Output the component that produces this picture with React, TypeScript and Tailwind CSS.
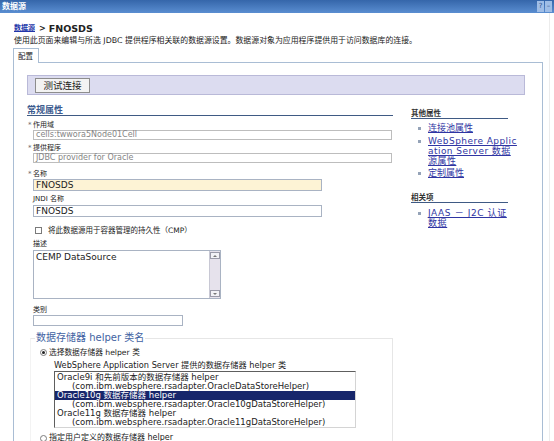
import React from 'react';

function Req({ children, req = false }: { children: React.ReactNode; req?: boolean }) {
  return (
    <div className="flex h-[10px] items-center text-[7px] leading-none text-[#222]">
      <span className="w-[6px] pl-[1px] text-[7px] text-[#666]">{req ? '*' : ''}</span>
      <span>{children}</span>
    </div>
  );
}

function Radio({ checked = false }: { checked?: boolean }) {
  return (
    <span className="flex h-[7px] w-[7px] items-center justify-center rounded-full border border-[#7c7c7c] bg-white">
      {checked && <span className="h-[3px] w-[3px] rounded-full bg-[#222]" />}
    </span>
  );
}

function Bullet({ children }: { children: React.ReactNode }) {
  return (
    <li className="flex items-start">
      <span className="ml-[7px] mt-[4px] h-[3px] w-[3px] shrink-0 bg-[#95a3b8]" />
      <a className="ml-[7px] text-[9px] leading-[10px] text-[#2f35a3] underline">{children}</a>
    </li>
  );
}

const helpers = [
  ['Oracle9i 和先前版本的数据存储器 helper', '(com.ibm.websphere.rsadapter.OracleDataStoreHelper)'],
  ['Oracle10g 数据存储器 helper', '(com.ibm.websphere.rsadapter.Oracle10gDataStoreHelper)'],
  ['Oracle11g 数据存储器 helper', '(com.ibm.websphere.rsadapter.Oracle11gDataStoreHelper)'],
];

export default function App() {
  return (
    <div className="flex h-screen w-full flex-col overflow-hidden bg-white font-['DejaVu_Sans','Noto_Sans_CJK_SC',sans-serif] text-[#222]">
      {/* title bar */}
      <div className="flex h-[13px] shrink-0 items-center justify-between bg-gradient-to-b from-[#3566aa] to-[#5a8ed1] pl-[2px] pr-[2px]">
        <span className="text-[8px] font-bold leading-none text-white">数据源</span>
        <div className="flex h-[11px] gap-px">
          <span className="flex w-[7px] items-center justify-center bg-[#9fbde6] text-[7px] leading-none text-[#2c4f86]">?</span>
          <span className="flex w-[7px] items-center justify-center bg-[#9fbde6] text-[7px] leading-none text-[#2c4f86]">–</span>
        </div>
      </div>

      <div className="flex min-h-0 flex-1">
        <div className="flex w-[550px] flex-col border-r border-[#ececec]">
          {/* breadcrumb */}
          <div className="mt-[11px] flex h-[10px] items-center pl-[14px] leading-none">
            <a className="text-[7px] font-bold text-[#2235a8] underline">数据源</a>
            <span className="ml-[4px] text-[8px] font-bold">&gt;</span>
            <span className="ml-[3px] text-[9.5px] font-bold">FNOSDS</span>
          </div>
          <div className="mt-[3px] flex h-[9px] items-center whitespace-nowrap pl-[14px] text-[7.9px] leading-none">
            使用此页面来编辑与所选 JDBC 提供程序相关联的数据源设置。数据源对象为应用程序提供用于访问数据库的连接。
          </div>

          {/* tab */}
          <div className="ml-[13px] mt-[4px] flex">
            <div className="relative z-10 -mb-px flex h-[15px] w-[26px] items-center border border-b-0 border-[#a9bdd4] bg-white pl-[4px] text-[7.5px] leading-none">
              配置
            </div>
          </div>

          <div className="ml-[13px] flex w-[530px] flex-1 flex-col border border-b-0 border-[#a9bdd4] pl-[13px] pt-[12px]">
            {/* button bar */}
            <div className="flex h-[20px] w-[498px] items-center border border-[#b9b9d8] bg-[#dcdcf0] pl-[7px]">
              <button className="flex h-[15px] w-[55px] items-center justify-center border border-[#8d8d8d] bg-[#f3f3f3] text-[9.5px] leading-none text-[#222]">
                测试连接
              </button>
            </div>

            <div className="mt-[11px] flex">
              {/* left column */}
              <div className="flex w-[366px] flex-col">
                <div className="flex h-[10px] items-center border-b border-[#3f5a84] text-[9px] font-bold leading-none text-[#3b5a8e]">
                  常规属性
                </div>

                <div className="mt-[4px]">
                  <Req req>作用域</Req>
                </div>
                <div className="ml-[6px] flex h-[10px] w-[359px] items-center border border-[#bdbdbd] px-[2px] text-[8px] leading-none text-[#858585]">
                  cells:twwora5Node01Cell
                </div>

                <div className="mt-[3px]">
                  <Req req>提供程序</Req>
                </div>
                <div className="ml-[6px] flex h-[10px] w-[359px] items-center border border-[#bdbdbd] px-[2px] text-[8px] leading-none text-[#858585]">
                  JDBC provider for Oracle
                </div>

                <div className="mt-[6px]">
                  <Req req>名称</Req>
                </div>
                <div className="ml-[6px] flex h-[12px] w-[289px] items-center border border-[#a9b3c3] bg-[#fdf3d5] px-[2px] text-[9px] leading-none">
                  FNOSDS
                </div>

                <div className="mt-[3px]">
                  <Req>JNDI 名称</Req>
                </div>
                <div className="ml-[6px] mt-[1px] flex h-[12px] w-[289px] items-center border border-[#a9b3c3] px-[2px] text-[9px] leading-none">
                  FNOSDS
                </div>

                <div className="mt-[8px] flex h-[10px] items-center pl-[8px] text-[7.5px] leading-none">
                  <span className="h-[7px] w-[7px] border border-[#7a7a7a] bg-white" />
                  <span className="ml-[6px]">将此数据源用于容器管理的持久性（CMP）</span>
                </div>

                <div className="mt-[4px]">
                  <Req>描述</Req>
                </div>
                <div className="ml-[6px] mt-[1px] flex h-[49px] w-[188px] border border-[#a9b3c3]">
                  <div className="flex-1 px-[2px] pt-[1px] text-[9px] leading-[10px]">CEMP DataSource</div>
                  <div className="flex w-[11px] flex-col justify-between border-l border-[#c8c8d4] bg-[#e6e2ec] py-px">
                    <span className="flex h-[7px] items-center justify-center border border-[#9a9aa8] bg-[#f2f2f6]">
                      <span className="h-0 w-0 border-x-[2px] border-b-[2px] border-x-transparent border-b-[#777]" />
                    </span>
                    <span className="flex h-[7px] items-center justify-center border border-[#9a9aa8] bg-[#f2f2f6]">
                      <span className="h-0 w-0 border-x-[2px] border-t-[2px] border-x-transparent border-t-[#777]" />
                    </span>
                  </div>
                </div>

                <div className="mt-[6px]">
                  <Req>类别</Req>
                </div>
                <div className="ml-[6px] h-[11px] w-[150px] border border-[#a9b3c3]" />

                <fieldset className="ml-[3px] mt-[7px] w-[363px] border border-b-0 border-[#e6e6e6] border-l-[#f3f3f3] pb-[20px]">
                  <legend className="ml-[4px] px-[1px] text-[10px] leading-[10px] text-[#4262a2]">数据存储器 helper 类名</legend>
                  <div className="mt-[4px] flex h-[10px] items-center pl-[9px] text-[7.7px] leading-none">
                    <Radio checked />
                    <span className="ml-[2px]">选择数据存储器 helper 类</span>
                  </div>
                  <div className="mt-[3px] flex h-[10px] items-center whitespace-nowrap pl-[23px] text-[8.2px] leading-none">
                    WebSphere Application Server 提供的数据存储器 helper 类
                  </div>
                  <div className="ml-[23px] mt-[1px] h-[57px] w-[302px] border border-b-[#d4d4d4] border-l-[#5e5e5e] border-r-[#d4d4d4] border-t-[#5e5e5e] bg-white pt-px text-[8.5px] leading-[9px]">
                    {helpers.map(([name, cls], i) => (
                      <div key={name}>
                        <div className={i === 1 ? 'h-[9px] whitespace-nowrap bg-[#17266b] pl-[2px] text-white' : 'h-[9px] whitespace-nowrap pl-[2px]'}>
                          {name}
                        </div>
                        <div className="h-[9px] whitespace-nowrap pl-[17px]">{cls}</div>
                      </div>
                    ))}
                  </div>
                  <div className="mt-[5px] flex h-[10px] items-center pl-[9px] text-[8px] leading-none">
                    <Radio />
                    <span className="ml-[2px]">指定用户定义的数据存储器 helper</span>
                  </div>
                </fieldset>
              </div>

              {/* right column */}
              <div className="ml-[18px] flex w-[110px] flex-col">
                <div className="mt-[3px] flex h-[10px] w-[97px] items-center border-b border-[#3f5a84] text-[7.5px] font-bold leading-none text-[#333]">
                  其他属性
                </div>
                <ul className="mt-[4px] flex flex-col">
                  <Bullet>连接池属性</Bullet>
                  <li className="mt-[3px] flex items-start">
                    <span className="ml-[7px] mt-[4px] h-[3px] w-[3px] shrink-0 bg-[#95a3b8]" />
                    <a className="ml-[7px] whitespace-nowrap text-[9px] leading-[10px] tracking-[0.45px] text-[#2f35a3] underline">
                      WebSphere Applic
                      <br />
                      ation Server 数据
                      <br />
                      源属性
                    </a>
                  </li>
                  <li className="mt-[2px]">
                    <ul>
                      <Bullet>定制属性</Bullet>
                    </ul>
                  </li>
                </ul>

                <div className="mt-[15px] flex h-[10px] w-[97px] items-center border-b border-[#3f5a84] text-[7.5px] font-bold leading-none text-[#333]">
                  相关项
                </div>
                <ul className="mt-[5px]">
                  <li className="flex items-start">
                    <span className="ml-[7px] mt-[4px] h-[3px] w-[3px] shrink-0 bg-[#95a3b8]" />
                    <a className="ml-[7px] whitespace-nowrap text-[9px] leading-[10px] tracking-[0.6px] text-[#2f35a3] underline">
                      JAAS － J2C 认证
                      <br />
                      数据
                    </a>
                  </li>
                </ul>
              </div>
            </div>
          </div>
        </div>
      </div>
    </div>
  );
}
